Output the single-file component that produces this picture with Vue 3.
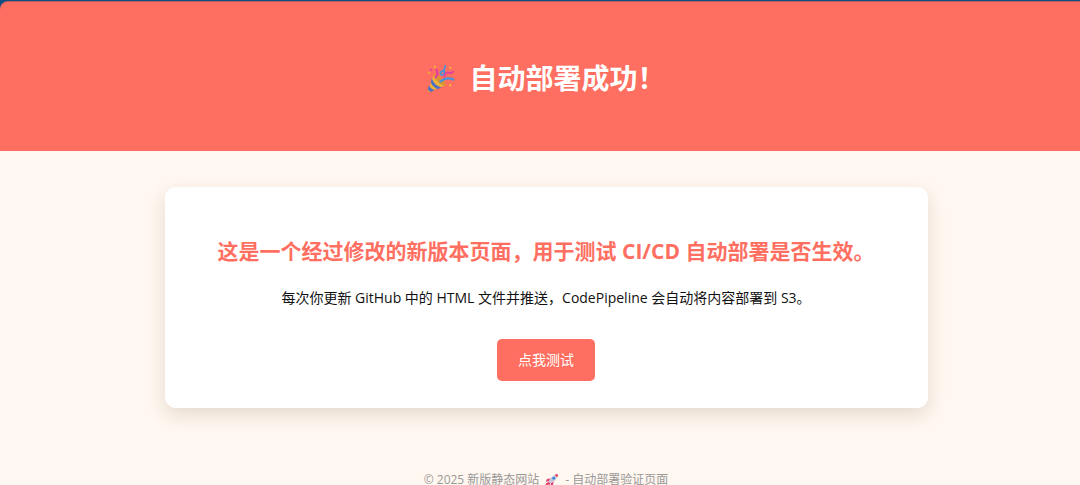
<script setup>
function runTest() {
  window.alert('自动部署成功！')
}
</script>

<template>
  <div class="page">
    <header class="hero">
      <h1>
        <svg class="party" viewBox="0 0 30 30" role="img" aria-label="庆祝">
          <path d="M8 11 2 28q0 1 1 1l17-7Q17 14 8 11Z" fill="#efb23a" />
          <path d="M6 15q3 8 10 9l-4 2Q6 23 5 19Z" fill="#4a6fc4" />
          <path d="M3 22q2 4 6 5l-4 2q-2-1-3-3Z" fill="#4a6fc4" />
          <path d="M8 11q2-2 8 4 6 5 4 7-3 1-8-4-5-5-4-7Z" fill="#d9942f" />
          <path d="M10 14q3-4 1-8" fill="none" stroke="#e0409c" stroke-width="2.200" stroke-linecap="round" />
          <path d="M20 2q-2 4-1 8-3 3-4 0 0-3 4-3" fill="none" stroke="#4a93d8" stroke-width="1.900" stroke-linecap="round" />
          <path d="M15 18q6-5 13-2" fill="none" stroke="#4a93d8" stroke-width="2.500" stroke-linecap="round" />
          <path d="M19 13q1-5 4-4t5-1" fill="none" stroke="#e0409c" stroke-width="1.900" stroke-linecap="round" />
          <path d="m4 5 2 2" stroke="#e0409c" stroke-width="1.800" />
          <circle cx="9" cy="3" r="1.100" fill="#f5b82e" />
          <circle cx="3" cy="9" r="1.100" fill="#f5b82e" />
          <circle cx="25" cy="4" r="1.200" fill="#f5b82e" />
          <circle cx="25" cy="22" r="1.200" fill="#f5b82e" />
        </svg>
        <span>自动部署成功！</span>
      </h1>
    </header>

    <main class="card">
      <h2>这是一个经过修改的新版本页面，用于测试 CI/CD 自动部署是否生效。</h2>
      <p>每次你更新 GitHub 中的 HTML 文件并推送，CodePipeline 会自动将内容部署到 S3。</p>
      <button type="button" @click="runTest">点我测试</button>
    </main>

    <footer class="footer">
      <span>© 2025 新版静态网站</span>
      <svg class="rocket" viewBox="0 0 16 16" role="img" aria-label="火箭">
        <path d="m6 6-4 1-1 3 4-1Z" fill="#e33b6d" />
        <path d="m10 10-1 4-3 1 1-4Z" fill="#e33b6d" />
        <path d="M13 2Q7 3 4 10l2 2q7-3 8-9Z" fill="#c9c4d6" />
        <path d="m11 2 4-1-1 4Z" fill="#e8394f" />
        <circle cx="10" cy="6" r="1.700" fill="#3b8ee5" />
        <path d="m4 10-3 2-1 4 4-1 2-3Z" fill="#e83d72" />
        <path d="m4 12-2 2 2-1Z" fill="#ffc13b" />
      </svg>
      <span>- 自动部署验证页面</span>
    </footer>
  </div>
</template>

<style>
html {
  background: #fff7f0;
  overflow: hidden;
}
</style>

<style scoped>
.page {
  width: calc(100% + 12px);
  background: #fff7f0;
  color: #111;
  font-family: "Open Sans", "Noto Sans CJK SC", sans-serif;
  text-align: center;
}

.hero {
  padding-top: 1px;
  background: #0f4c81;
}

h1 {
  display: flex;
  align-items: center;
  justify-content: center;
  gap: 14px;
  margin: 0;
  padding: 56px 20px 52px;
  border-top: 1px solid #b9605f;
  border-top-left-radius: 8px;
  background: #ff6f61;
  color: #fff;
  font-size: 28px;
  line-height: 41px;
}

.party {
  width: 29px;
  height: 29px;
}

.card {
  box-sizing: border-box;
  width: calc(100% - 40px);
  max-width: 763px;
  margin: 36px auto;
  padding: 48px 36px 27px;
  border-radius: 11px;
  background: #fff;
  box-shadow: 0 7px 18px rgba(80, 60, 30, 0.15);
}

h2 {
  margin: 0 0 18px;
  color: #ff6f61;
  font-size: 21px;
  line-height: 32px;
  white-space: nowrap;
}

p {
  margin: 0 0 28px;
  font-size: 14px;
  line-height: 26px;
}

button {
  display: block;
  margin: 0 auto;
  padding: 10px 21px;
  border: 0;
  border-radius: 5px;
  background: #ff6f61;
  color: #fff;
  font: inherit;
  font-size: 14px;
  line-height: 22px;
  cursor: pointer;
}

.footer {
  display: flex;
  align-items: center;
  justify-content: center;
  gap: 6px;
  padding-top: 26px;
  color: #999;
  font-size: 12px;
  line-height: 20px;
}

.rocket {
  width: 14px;
  height: 14px;
}
</style>
